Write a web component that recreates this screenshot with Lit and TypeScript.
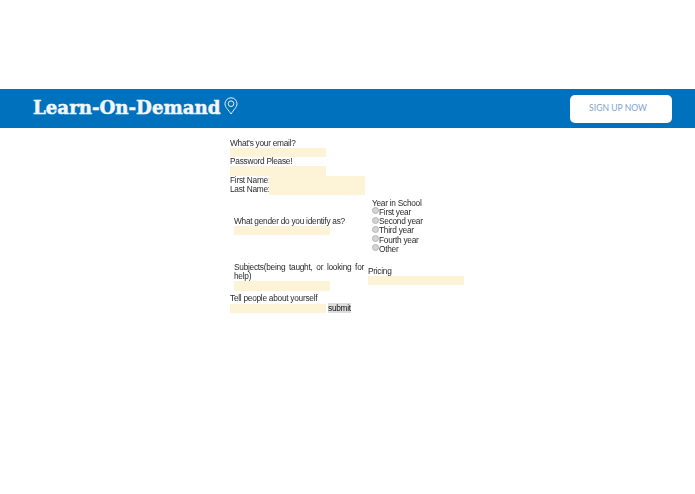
import { LitElement, html, css } from "lit";
import { customElement } from "lit/decorators.js";

@customElement("app-root")
export class AppRoot extends LitElement {
  static styles = css`
    :host { display: block; height: 494px; background: #fff; font-family: "Liberation Sans", Arial, sans-serif; font-size: 8.3px; letter-spacing: -0.26px; line-height: 9.25px; color: #2a2a2a; }
    .top { height: 89px; }
    .bar { height: 39px; background: #0071bc; display: flex; align-items: center; justify-content: space-between; padding: 0 23px 0 33px; }
    .brand { display: flex; align-items: center; gap: 4px; color: #f4f7fa; font-family: "DejaVu Serif", serif; font-weight: 700; font-size: 18.2px; letter-spacing: 0; -webkit-text-stroke: 0.5px #f4f7fa; }
    .brand span { margin-top: -2px; }
    .brand svg { display: block; margin-top: -6px; }
    .signup { width: 102px; height: 28px; box-sizing: border-box; padding-right: 6px; background: #fff; border-radius: 5px; display: flex; align-items: center; justify-content: center; color: #7fa3cc; font-family: "Lato", sans-serif; font-size: 8.6px; letter-spacing: 0; }
    form { width: 240px; margin: 10px 0 0 230px; display: flex; flex-direction: column; will-change: transform; }
    .field { height: 9.5px; width: 96px; background: #fdf3d7; }
    .stack { display: flex; flex-direction: column; }
    .email { margin-top: 0.6px; margin-bottom: -0.6px; }
    .names { display: grid; grid-template-columns: 39px 96px; }
    .names span { height: 9px; white-space: nowrap; }
    .pair { display: grid; grid-template-columns: 138px 1fr; }
    .gender { padding: 22px 0 0 4px; }
    .year { padding: 4px 0 0 4px; }
    .radio { display: flex; align-items: center; height: 9.25px; }
    .dot { width: 7px; height: 7px; border-radius: 50%; background: #d4d4d4; border: 1px solid #b4b4b4; box-sizing: border-box; margin-top: -3px; }
    .subjects { padding: 8.500px 0 0 4px; width: 130px; box-sizing: content-box; text-align: justify; }
    .pricing { padding: 12.500px 0 0 0; }
    .tell { margin-top: 3.500px; }
    .last { display: flex; align-items: flex-end; }
    .submit { background: #dedede; height: 10px; line-height: 10px; margin-left: 2px; color: #111; }
  `;

  render() {
    return html`
      <div class="top"></div>
      <header class="bar">
        <div class="brand">
          <span>Learn-On-Demand</span>
          <svg width="14" height="18" viewBox="0 0 14 18" fill="none" stroke="#eaf1f7" stroke-width="1">
            <path d="M7 17C4.5 13 1 10.200 1 6.800a6 6 0 0 1 12 0C13 10.200 9.500 13 7 17z" />
            <circle cx="7" cy="6.700" r="2.800" />
          </svg>
        </div>
        <div class="signup">SIGN UP NOW</div>
      </header>
      <form>
        <div class="stack email"><span>What's your email?</span><div class="field"></div></div>
        <div class="stack"><span>Password Please!</span><div class="field"></div></div>
        <div class="names">
          <span>First Name:</span><div class="field"></div>
          <span>Last Name:</span><div class="field"></div>
        </div>
        <div class="pair">
          <div class="gender stack"><span>What gender do you identify as?</span><div class="field"></div></div>
          <div class="year">
            <div>Year in School</div>
            ${["First year", "Second year", "Third year", "Fourth year", "Other"].map(
              (t) => html`<div class="radio"><span class="dot"></span><span>${t}</span></div>`
            )}
          </div>
        </div>
        <div class="pair">
          <div class="subjects stack"><span>Subjects(being taught, or looking for help)</span><div class="field"></div></div>
          <div class="pricing stack"><span>Pricing</span><div class="field"></div></div>
        </div>
        <div class="tell">Tell people about yourself</div>
        <div class="last"><div class="field"></div><span class="submit">submit</span></div>
      </form>
    `;
  }
}
